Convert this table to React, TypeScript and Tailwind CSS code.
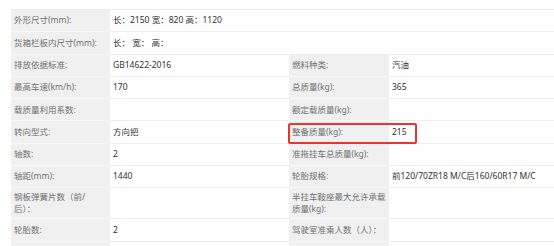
import React from 'react';

type Row = { l1: string; v1: string; l2?: string; v2?: string; wide?: boolean };

const rows: Row[] = [
  { l1: '外形尺寸(mm):', v1: '长：2150 宽：820 高：1120', wide: true },
  { l1: '货箱栏板内尺寸(mm):', v1: '长： 宽： 高：', wide: true },
  { l1: '排放依据标准:', v1: 'GB14622-2016', l2: '燃料种类:', v2: '汽油' },
  { l1: '最高车速(km/h):', v1: '170', l2: '总质量(kg):', v2: '365' },
  { l1: '载质量利用系数:', v1: '', l2: '额定载质量(kg):', v2: '' },
  { l1: '转向型式:', v1: '方向把', l2: '整备质量(kg):', v2: '215' },
  { l1: '轴数:', v1: '2', l2: '准拖挂车总质量(kg):', v2: '' },
  { l1: '轴距(mm):', v1: '1440', l2: '轮胎规格:', v2: '前120/70ZR18 M/C后160/60R17 M/C' },
  { l1: '钢板弹簧片数（前/\n后）：', v1: '', l2: '半挂车鞍座最大允许承载\n质量(kg):', v2: '' },
  { l1: '轮胎数:', v1: '2', l2: '驾驶室准乘人数（人）：', v2: '' },
  { l1: '', v1: '', l2: '', v2: '' },
];

const cell = 'flex items-center min-h-[22.3px] py-[2.5px] leading-[12.5px] border-b whitespace-pre-line';
const label = `${cell} bg-[#f0f0f0] border-[#f7f7f7] text-[#707070] pl-[3px] pr-[2px]`;
const value = `${cell} bg-white border-[#ececec] text-[#333] pl-[3px] pr-[3px]`;

export default function App() {
  return (
    <div
      className="relative h-[246px] w-[554px] overflow-hidden bg-white pl-[11px] pt-[9px] text-[8.5px]"
      style={{ fontFamily: '"Noto Sans", "Noto Sans CJK SC", sans-serif' }}
    >
      <div className="grid grid-cols-[99px_179px_100px_1fr] border-t border-[#ececec]">
        {rows.map((r, i) => (
          <React.Fragment key={i}>
            <div className={label}>{r.l1}</div>
            {r.wide ? (
              <div className={`${value} col-span-3`}>{r.v1}</div>
            ) : (
              <>
                <div className={value}>{r.v1}</div>
                <div className={label}>{r.l2}</div>
                <div className={value}>{r.v2}</div>
              </>
            )}
          </React.Fragment>
        ))}
      </div>
      <div className="absolute left-[288px] top-[123px] h-[21px] w-[129px] rounded-[2px] border-2 border-[#e8352f]" />
    </div>
  );
}
